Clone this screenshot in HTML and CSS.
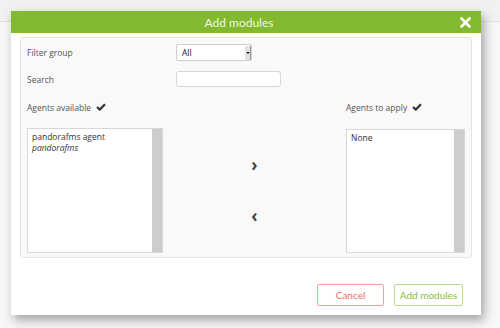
FILE: index.html
```html
<!DOCTYPE html>
<html lang="en">
<head>
    <meta charset="UTF-8">
    <title>Add modules</title>
    <link rel="stylesheet" href="styles.css">
</head>
<body>

<div class="page-top"></div>

<div class="dialog">
    <div class="dialog-title">
        <span>Add modules</span>
        <svg class="close" width="11" height="11" viewBox="0 0 11 11"><path d="M1.5 1.5 L9.5 9.5 M9.5 1.5 L1.5 9.5" stroke="#fff" stroke-width="2.6" stroke-linecap="round"/></svg>
    </div>
    <div class="dialog-body">
        <div class="panel">
            <div class="row">
                <label class="label">Filter group</label>
                <div class="select">All<span class="select-arrow"></span></div>
            </div>
            <div class="row row-search">
                <label class="label">Search</label>
                <input type="text" class="search">
            </div>
            <div class="lists">
                <div class="list-col">
                    <div class="list-head">Agents available
                        <svg class="check" width="10" height="8" viewBox="0 0 10 8"><path d="M1 4 L3.8 6.6 L9 1.2" fill="none" stroke="#333" stroke-width="2.2"/></svg>
                    </div>
                    <div class="listbox listbox-left">
                        <div class="items">
                            <div>pandorafms agent</div>
                            <div class="italic">pandorafms</div>
                        </div>
                        <div class="scroll"></div>
                    </div>
                </div>
                <div class="arrows">
                    <span class="arrow">&#8250;</span>
                    <span class="arrow">&#8249;</span>
                </div>
                <div class="list-col">
                    <div class="list-head">Agents to apply
                        <svg class="check" width="10" height="8" viewBox="0 0 10 8"><path d="M1 4 L3.8 6.6 L9 1.2" fill="none" stroke="#333" stroke-width="2.2"/></svg>
                    </div>
                    <div class="listbox listbox-right">
                        <div class="items">
                            <div>None</div>
                        </div>
                        <div class="scroll"></div>
                    </div>
                </div>
            </div>
        </div>
        <div class="buttons">
            <button class="btn btn-cancel">Cancel</button>
            <button class="btn btn-add">Add modules</button>
        </div>
    </div>
</div>

</body>
</html>
```

FILE: styles.css
```css
body {
    margin: 0;
    width: 500px;
    height: 328px;
    background-color: #f7f7f7;
    font-family: "Open Sans", sans-serif;
    overflow: hidden;
}
.page-top {
    height: 21px;
    border-bottom: 1px solid #e2e2e2;
    background-color: #f1f1f1;
}
.dialog {
    position: absolute;
    left: 11px;
    top: 11px;
    width: 470px;
    height: 304px;
    background: #fff;
    box-shadow: 3px 5px 10px rgba(0, 0, 0, 0.35);
    display: flex;
    flex-direction: column;
}
.dialog-title {
    height: 22px;
    background-color: #82b92e;
    color: #eef5e4;
    font-family: Lato, sans-serif;
    font-size: 12px;
    display: flex;
    align-items: center;
    justify-content: center;
    padding-right: 14px;
    position: relative;
}
.close {
    position: absolute;
    right: 10px;
    top: 6px;
}
.dialog-body {
    padding: 4px 9px 0 9px;
    flex: 1;
    display: flex;
    flex-direction: column;
}
.panel {
    height: 221px;
    border: 1px solid #e4e4e4;
    border-radius: 3px;
    background-color: #f9f9f9;
    padding: 4px 6px 0 6px;
    box-sizing: border-box;
    font-size: 8.5px;
    color: #444;
}
.row {
    display: flex;
    align-items: center;
    height: 20px;
}
.row-search {
    margin-top: 8px;
    height: 18px;
}
.label {
    width: 149px;
    color: #555;
}
.select {
    width: 76px;
    height: 17px;
    border: 1px solid #cfcfcf;
    border-radius: 2px;
    background: #fff;
    box-sizing: border-box;
    padding-left: 5px;
    font-size: 8.5px;
    color: #222;
    display: flex;
    align-items: center;
    position: relative;
}
.select-arrow {
    position: absolute;
    right: 0;
    top: 1px;
    width: 5px;
    height: 14px;
    background: #e2e2e2;
    border-right: 1px solid #999;
}
.select-arrow::after {
    content: "";
    position: absolute;
    left: 1px;
    top: 6px;
    border-left: 2px solid transparent;
    border-right: 2px solid transparent;
    border-top: 2px solid #222;
}
.search {
    width: 105px;
    height: 16px;
    border: 1px solid #d6d6d6;
    border-radius: 3px;
    box-sizing: border-box;
    margin: 0;
}
.lists {
    display: flex;
    margin-top: 12px;
}
.list-col {
    display: flex;
    flex-direction: column;
}
.list-head {
    height: 14px;
    display: flex;
    align-items: center;
    color: #555;
}
.check {
    margin-left: 5px;
}
.listbox {
    margin-top: 14px;
    height: 125px;
    border: 1px solid #d8d8d8;
    background: #fff;
    display: flex;
    box-sizing: border-box;
}
.listbox-left {
    width: 136px;
}
.listbox-right {
    width: 119px;
    margin-top: 15px;
    height: 124px;
}
.items {
    flex: 1;
    padding: 2px 4px;
    color: #333;
    line-height: 11px;
}
.italic {
    font-style: italic;
}
.scroll {
    width: 10px;
    background: #cdcdcd;
}
.arrows {
    width: 185px;
    display: flex;
    flex-direction: column;
    align-items: center;
    padding-top: 55px;
    gap: 31px;
}
.arrow {
    font-size: 17px;
    font-weight: bold;
    color: #444;
    line-height: 20px;
}
.buttons {
    display: flex;
    justify-content: flex-end;
    gap: 10px;
    margin-top: 26px;
    padding-right: 9px;
}
.btn {
    height: 22px;
    background: #fff;
    border-radius: 2px;
    font-family: Lato, sans-serif;
    font-size: 10px;
    padding: 0;
}
.btn-cancel {
    width: 67px;
    border: 1px solid #f8a0a0;
    color: #f46b6b;
}
.btn-add {
    width: 69px;
    border: 1px solid #b9dc8a;
    color: #86be3e;
}
```
